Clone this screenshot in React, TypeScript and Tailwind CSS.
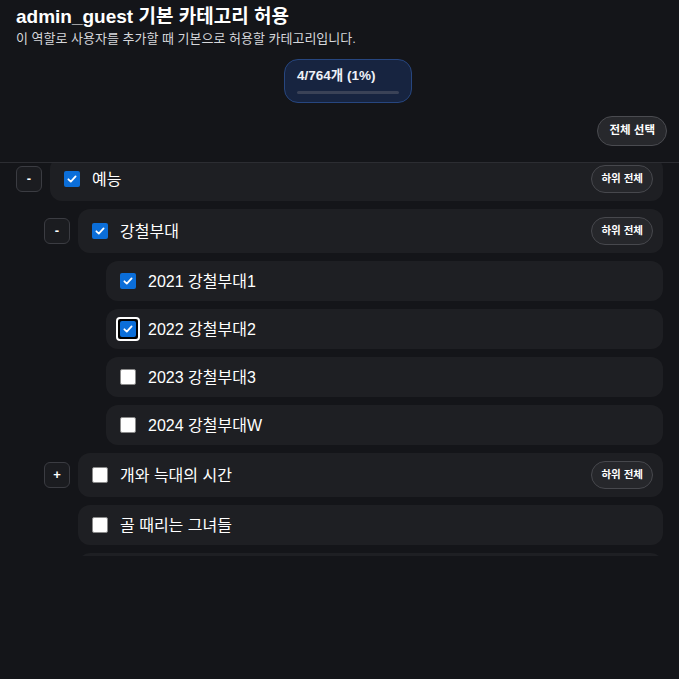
import React from 'react';

type Node = {
    id: string;
    name: string;
    checked: boolean;
    focused?: boolean;
    expanded?: boolean;
    children?: Node[];
};

const tree: Node[] = [
    {
        id: 'ent',
        name: '예능',
        checked: true,
        expanded: true,
        children: [
            {
                id: 'steel',
                name: '강철부대',
                checked: true,
                expanded: true,
                children: [
                    { id: 's1', name: '2021 강철부대1', checked: true },
                    { id: 's2', name: '2022 강철부대2', checked: true, focused: true },
                    { id: 's3', name: '2023 강철부대3', checked: false },
                    { id: 's4', name: '2024 강철부대W', checked: false },
                ],
            },
            {
                id: 'dog',
                name: '개와 늑대의 시간',
                checked: false,
                expanded: false,
                children: [{ id: 'd1', name: '', checked: false }],
            },
            { id: 'goal', name: '골 때리는 그녀들', checked: false },
            { id: 'next', name: '', checked: false },
        ],
    },
];

const font = { fontFamily: '"Liberation Sans", "Noto Sans CJK KR", sans-serif' };

const CheckBox: React.FC<{ checked: boolean; focused?: boolean }> = ({ checked, focused }) => {
    const box = checked ? (
        <span className="flex h-4 w-4 items-center justify-center rounded-[2px] bg-[#0b6ed9]">
            <svg viewBox="0 0 16 16" className="h-3 w-3">
                <path d="M3.2 8.4 6.4 11.4 12.8 4.6" fill="none" stroke="#fff" strokeWidth="2.4" strokeLinecap="round" strokeLinejoin="round" />
            </svg>
        </span>
    ) : (
        <span className="block h-4 w-4 rounded-[2px] border border-[#8a8a8a] bg-white" />
    );

    if (focused) {
        return (
            <span className="flex h-6 w-6 items-center justify-center rounded-[4px] border-2 border-white bg-black">
                {box}
            </span>
        );
    }
    return <span className="flex h-4 w-4 items-center justify-center">{box}</span>;
};

const TreeRow: React.FC<{ node: Node; depth: number }> = ({ node, depth }) => {
    const hasChildren = !!node.children && node.children.length > 0;
    const indent = depth === 0 ? 'pl-0' : depth === 1 ? 'pl-[28px]' : 'pl-[56px]';

    return (
        <>
            <div className={`flex items-center gap-2 ${indent}`}>
                {hasChildren ? (
                    <button className="flex h-[26px] w-[26px] shrink-0 items-center justify-center rounded-md border border-[#3b3c42] bg-[#1b1c20] text-[13px] font-bold text-white">
                        {node.expanded ? '-' : '+'}
                    </button>
                ) : (
                    <span className="w-[26px] shrink-0" />
                )}
                <div
                    className={`flex flex-1 items-center rounded-xl bg-[#1e1f23] pl-[14px] pr-[10px] ${hasChildren ? 'h-11' : 'h-10'}`}
                >
                    <div className="relative flex h-4 w-4 items-center justify-center">
                        <span className="absolute">
                            <CheckBox checked={node.checked} focused={node.focused} />
                        </span>
                    </div>
                    <span className="ml-[12px] mt-[2px] flex-1 text-[16px] leading-5 text-white">{node.name}</span>
                    {hasChildren && (
                        <button className="h-7 rounded-full border border-[#47484d] bg-[#26272b] px-[9px] text-[10.5px] font-bold text-white">
                            하위 전체
                        </button>
                    )}
                </div>
            </div>
            {hasChildren && node.expanded &&
                node.children!.map((c) => <TreeRow key={c.id} node={c} depth={depth + 1} />)}
        </>
    );
};

export default function App() {
    return (
        <div className="flex h-[679px] w-[679px] flex-col overflow-hidden bg-[#141519] text-white" style={font}>
            <div className="px-4 pt-[4px]">
                <h1 className="text-[19px] font-bold leading-[26px]">admin_guest 기본 카테고리 허용</h1>
                <p className="mt-[1px] text-[13px] leading-[16px] text-[#d6d7db]">
                    이 역할로 사용자를 추가할 때 기본으로 허용할 카테고리입니다.
                </p>
            </div>
            <div className="mt-[12px] flex justify-center pl-[17px]">
                <div className="flex h-11 w-32 flex-col justify-center rounded-[14px] border border-[#27467f] bg-[#172440] px-3">
                    <span className="text-[13.5px] font-bold leading-4 text-[#eef1f7]">4/764개 (1%)</span>
                    <div className="mt-[7px] h-[3px] w-full rounded-full bg-[#3a4257]" />
                </div>
            </div>
            <div className="mt-[13px] flex justify-end px-3">
                <button className="h-[30px] rounded-full border border-[#4a4b50] bg-[#27282c] px-[11px] text-[11.5px] font-bold text-white">
                    전체 선택
                </button>
            </div>
            <div className="mt-[16px] h-[394px] overflow-hidden border-t border-[#2c2d32]">
                <div className="-mt-[6px] flex flex-col gap-2 pl-4 pr-4">
                    {tree.map((n) => (
                        <TreeRow key={n.id} node={n} depth={0} />
                    ))}
                </div>
            </div>
        </div>
    );
}
